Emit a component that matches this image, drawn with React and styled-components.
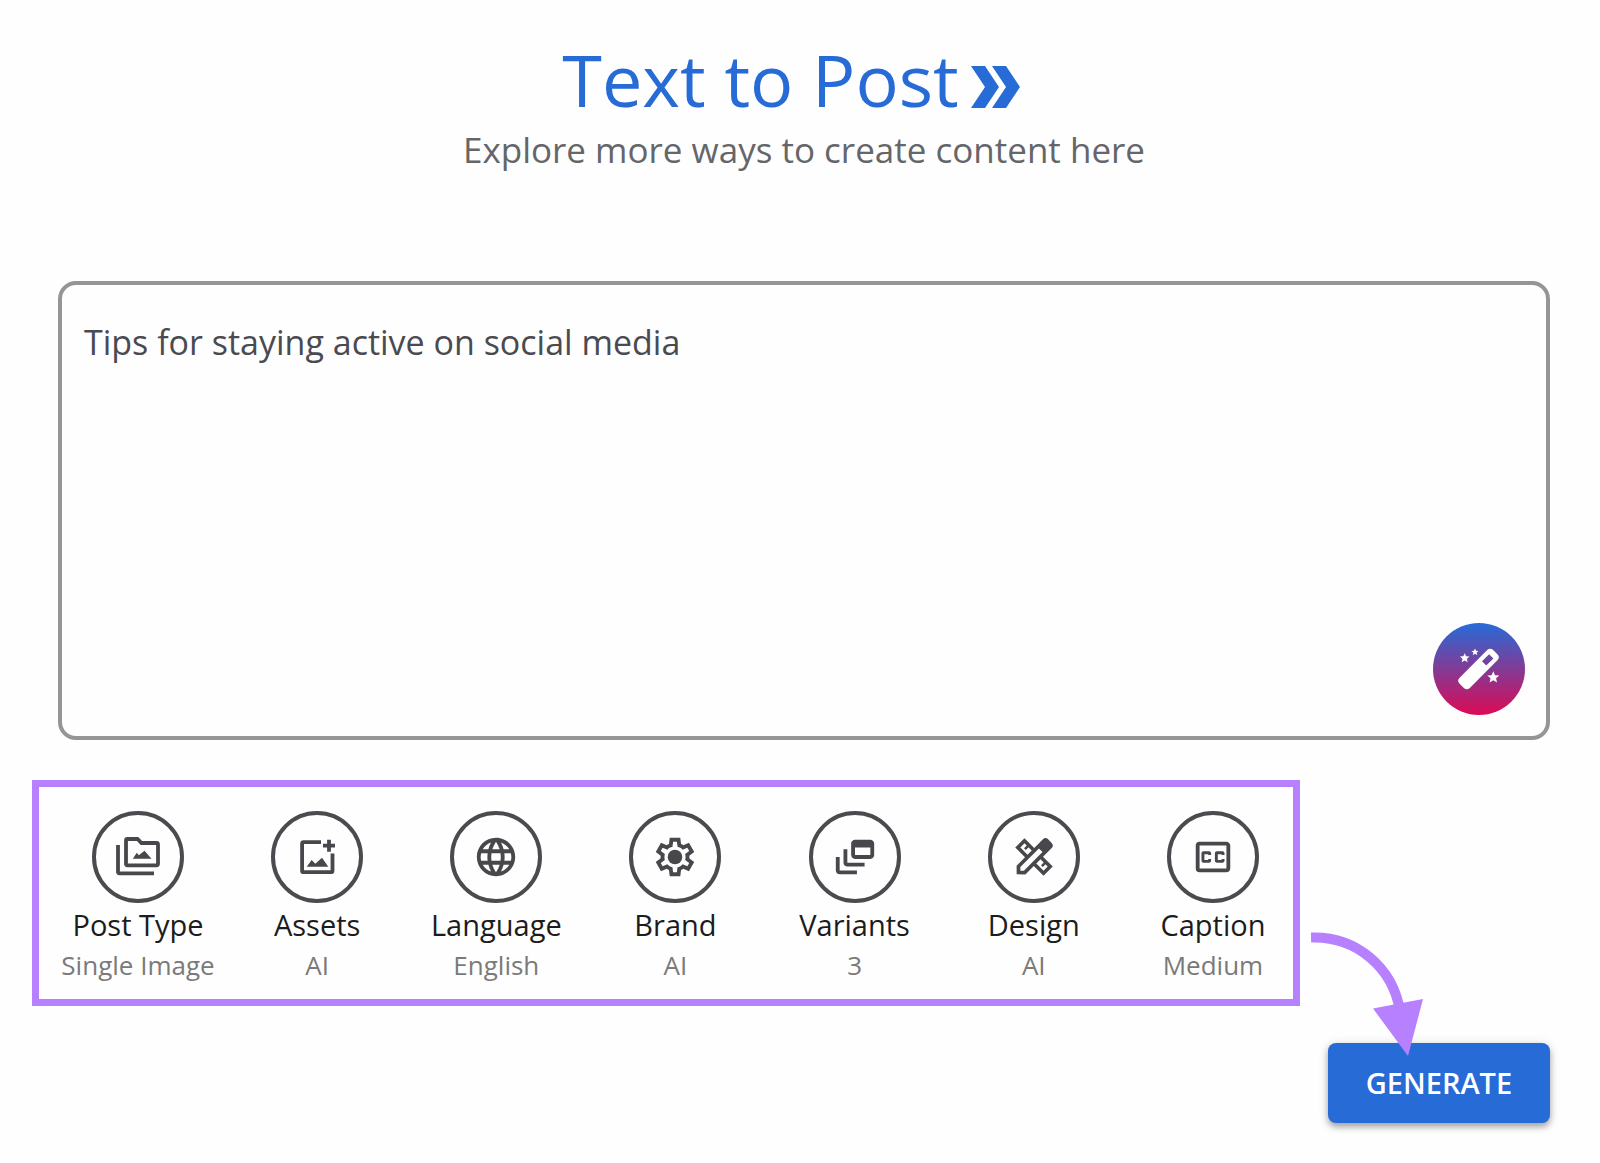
import React, { useState } from 'react';
import styled, { createGlobalStyle } from 'styled-components';
import { MdLanguage, MdOutlineClosedCaption, MdOutlineDynamicFeed } from 'react-icons/md';

const PostTypeIcon = () => (
  <svg viewBox="0 0 46 46" fill="none" stroke="currentColor" strokeWidth="3.8">
    <path d="M11 6.5Q11 5 12.5 5H22.5L26.5 9H41.5Q43 9 43 10.5V29.8Q43 31.3 41.5 31.3H12.5Q11 31.3 11 29.8Z" />
    <path d="M3 11V37.8Q3 39.3 4.5 39.3H39" />
    <path d="M17.8 24.7L21.8 18.7L23.8 21.3L29.5 16.7L36.5 24.7Z" fill="currentColor" stroke="none" />
  </svg>
);

const AssetsIcon = () => (
  <svg viewBox="0 0 46 46" fill="none" stroke="currentColor" strokeWidth="3.8">
    <path d="M27 8.2H9.6Q8.1 8.2 8.1 9.7V36.7Q8.1 38.2 9.6 38.2H37Q38.5 38.2 38.5 36.7V19.4" />
    <path d="M35 5.7V17.7M29 11.7H41" />
    <path d="M12.7 32.7L17.7 26L21.3 29.7L28 23.7L34.3 32.7Z" fill="currentColor" stroke="none" />
  </svg>
);

const BrandIcon = () => (
  <svg viewBox="0 -960 960 960" fill="currentColor">
    <path d="m370-80-16-128q-13-5-24.5-12T307-235l-119 50L78-375l103-78q-1-7-1-13.5v-27q0-6.5 1-13.5L78-585l110-190 119 50q11-8 23-15t24-12l16-128h220l16 128q13 5 24.5 12t22.5 15l119-50 110 190-103 78q1 7 1 13.5v27q0 6.5-2 13.5l103 78-110 190-118-50q-11 8-23 15t-24 12L590-80H370Zm70-80h79l14-106q31-8 57.5-23.5T639-327l99 41 39-68-86-65q5-14 7-29.5t2-31.5q0-16-2-31.5t-7-29.5l86-65-39-68-99 42q-22-23-48.5-38.5T533-694l-13-106h-79l-14 106q-31 8-57.5 23.5T321-633l-99-41-39 68 86 64q-5 15-7 30t-2 32q0 16 2 31t7 30l-86 65 39 68 99-42q22 23 48.5 38.5T427-266l13 106Z" />
    <circle cx="480" cy="-480" r="152" />
  </svg>
);

const DesignIcon = () => (
  <svg viewBox="0 0 46 46" fill="none">
    <g transform="translate(23 23) rotate(45)" stroke="currentColor">
      <rect x="-18.2" y="-4.7" width="36.4" height="9.4" strokeWidth="3.6" />
      <path d="M-12-4.5V.8M12-4.5V.8" strokeWidth="2.6" />
    </g>
    <g transform="translate(23 23) rotate(-45)">
      <path
        d="M-24.5 0L-18.4-6.2H18.5Q22.5-6.2 22.5-2.2V2.2Q22.5 6.2 18.5 6.2H-18.4Z"
        fill="currentColor"
      />
      <path d="M-19.4 0L-16.8-2.5H9.5V2.5H-16.8Z" fill="#fefefe" />
    </g>
  </svg>
);

const STAR = 'M0-10L2.9-3.4L10-2.9L4.6 1.7L6.2 9L0 5L-6.2 9L-4.6 1.7L-10-2.9L-2.9-3.4Z';

const WandIcon = () => (
  <svg viewBox="0 0 92 92" fill="#fff">
    <path
      fillRule="evenodd"
      transform="translate(45.5 46) rotate(-45)"
      d="M-19.5-7.2H19.5Q23.7-7.2 23.7-3V3Q23.7 7.2 19.5 7.2H-19.5Q-23.7 7.2-23.7 3V-3Q-23.7-7.2-19.5-7.2ZM8-3V3H18V-3Z"
    />
    <path transform="translate(31.7 35) scale(.48)" d={STAR} />
    <path transform="translate(42 29) scale(.36)" d={STAR} />
    <path transform="translate(60.3 54.2) scale(.6)" d={STAR} />
  </svg>
);

const options = [
  { label: 'Post Type', value: 'Single Image', icon: PostTypeIcon },
  { label: 'Assets', value: 'AI', icon: AssetsIcon },
  { label: 'Language', value: 'English', icon: MdLanguage },
  { label: 'Brand', value: 'AI', icon: BrandIcon },
  { label: 'Variants', value: '3', icon: MdOutlineDynamicFeed },
  { label: 'Design', value: 'AI', icon: DesignIcon },
  { label: 'Caption', value: 'Medium', icon: MdOutlineClosedCaption },
];

const App = () => {
  const [prompt, setPrompt] = useState('Tips for staying active on social media');

  return (
    <>
      <GlobalStyle />
      <Page>
        <Header>
          <Title>
            Text to Post
            <Chevrons viewBox="0 0 49 42" aria-hidden="true">
              <path d="M0 0H14L28 21L14 42H0L14 21ZM21 0H35L49 21L35 42H21L35 21Z" />
            </Chevrons>
          </Title>
          <Subtitle>Explore more ways to create content here</Subtitle>
        </Header>

        <PromptBox>
          <PromptInput
            aria-label="Post prompt"
            spellCheck={false}
            value={prompt}
            onChange={(e) => setPrompt(e.target.value)}
          />
          <WandButton type="button" aria-label="Enhance prompt">
            <WandIcon />
          </WandButton>
        </PromptBox>

        <BottomRow>
          <Options>
            {options.map(({ label, value, icon: Icon }) => (
              <Option type="button" key={label}>
                <IconCircle>
                  <Icon />
                </IconCircle>
                <OptionLabel>{label}</OptionLabel>
                <OptionValue>{value}</OptionValue>
              </Option>
            ))}
          </Options>
          <Actions>
            <GenerateButton type="button">GENERATE</GenerateButton>
            <Arrow viewBox="0 0 112 126" aria-hidden="true">
              <path d="M0 6.5C46 5 82 37 89 80" fill="none" stroke="#b780ff" strokeWidth="10" />
              <path d="M62 77.5L112 68L97 125Z" fill="#b780ff" />
            </Arrow>
          </Actions>
        </BottomRow>
      </Page>
    </>
  );
};

const GlobalStyle = createGlobalStyle`
  * {
    box-sizing: border-box;
  }

  body {
    margin: 0;
    background: #fefefe;
    font-family: 'Open Sans', 'Noto Sans', sans-serif;
  }

  button,
  textarea {
    font-family: inherit;
  }
`;

const Page = styled.main`
  padding: 39px 50px 40px 32px;
`;

const Header = styled.header`
  display: flex;
  flex-direction: column;
  align-items: center;
  gap: 7px;
  padding-left: 26px;
`;

const Title = styled.h1`
  display: flex;
  align-items: center;
  gap: 12px;
  margin: 0;
  padding-right: 26px;
  color: #276bd7;
  font-size: 72px;
  font-weight: 400;
  line-height: 80px;
`;

const Chevrons = styled.svg`
  width: 49px;
  height: 42px;
  margin-top: 16px;
  fill: currentColor;
`;

const Subtitle = styled.p`
  margin: 0;
  color: #656669;
  font-size: 35px;
  font-weight: 400;
  line-height: 48px;
`;

const PromptBox = styled.section`
  position: relative;
  display: flex;
  margin: 107px 0 40px 26px;
`;

const PromptInput = styled.textarea`
  flex: 1;
  height: 459px;
  padding: 33px 22px;
  border: 4px solid #959595;
  border-radius: 18px;
  outline: none;
  resize: none;
  background: transparent;
  color: #4a4a50;
  font-size: 34px;
  line-height: 48px;
`;

const WandButton = styled.button`
  position: absolute;
  right: 25px;
  bottom: 25px;
  width: 92px;
  height: 92px;
  padding: 0;
  border: none;
  border-radius: 50%;
  background: linear-gradient(#276bd7, #dd0a54);
  cursor: pointer;

  svg {
    display: block;
  }
`;

const BottomRow = styled.div`
  display: grid;
  grid-template-columns: minmax(0, 1fr) 222px;
  column-gap: 28px;
`;

const Options = styled.section`
  display: flex;
  justify-content: space-between;
  align-self: start;
  padding: 24px 4px 14px 23px;
  border: 7px solid #b780ff;
`;

const Option = styled.button`
  display: flex;
  flex-direction: column;
  align-items: center;
  width: 152px;
  padding: 0;
  border: none;
  background: none;
  white-space: nowrap;
  cursor: pointer;
`;

const IconCircle = styled.span`
  display: flex;
  align-items: center;
  justify-content: center;
  width: 92px;
  height: 92px;
  margin-bottom: 2px;
  border: 4px solid #4b4b4f;
  border-radius: 50%;
  color: #48484c;

  svg {
    width: 46px;
    height: 46px;
  }
`;

const OptionLabel = styled.span`
  color: #1c1c1c;
  font-size: 29px;
  line-height: 40px;
`;

const OptionValue = styled.span`
  color: #7a7a7a;
  font-size: 26px;
  line-height: 40px;
`;

const Actions = styled.div`
  position: relative;
  padding-top: 263px;
`;

const GenerateButton = styled.button`
  display: block;
  width: 100%;
  height: 80px;
  padding: 0 0 2px;
  border: none;
  border-radius: 8px;
  background: #276bd7;
  box-shadow: 0 4px 6px rgba(0, 0, 0, 0.3), 0 1px 12px rgba(0, 0, 0, 0.12);
  color: #fff;
  font-size: 29px;
  font-weight: 600;
  cursor: pointer;
`;

/* points from the options frame to the generate button */
const Arrow = styled.svg`
  position: absolute;
  top: 151px;
  left: -17px;
  width: 112px;
  height: 126px;
  pointer-events: none;
`;

export default App;
